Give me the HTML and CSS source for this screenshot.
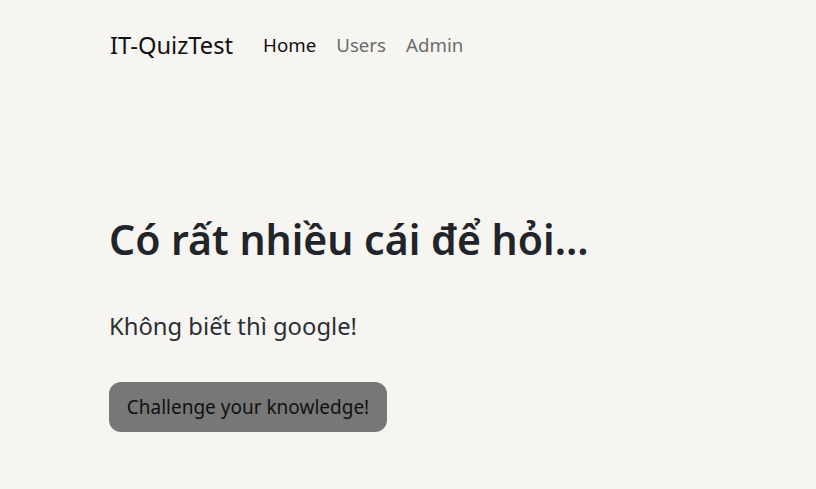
FILE: index.html
```html
<!DOCTYPE html>
<html lang="vi">
<head>
<meta charset="utf-8">
<title>IT-QuizTest</title>
<link rel="stylesheet" href="styles.css">
</head>
<body>
<header class="navbar">
  <a class="brand" href="#">IT-QuizTest</a>
  <nav class="nav">
    <a class="nav-link active" href="#">Home</a>
    <a class="nav-link" href="#">Users</a>
    <a class="nav-link" href="#">Admin</a>
  </nav>
</header>
<main class="hero">
  <h1 class="title">Có rất nhiều cái để hỏi...</h1>
  <p class="lead">Không biết thì google!</p>
  <a class="btn" href="#">Challenge your knowledge!</a>
</main>
</body>
</html>
```

FILE: styles.css
```css
* { box-sizing: border-box; }
html, body { margin: 0; }
body {
  background: #f6f5f1;
  font-family: "Noto Sans", "Open Sans", sans-serif;
  color: #212529;
  padding: 0 0 0 109px;
}
a { text-decoration: none; }
.navbar {
  display: flex;
  align-items: center;
  height: 89px;
  gap: 30px;
}
.brand {
  font-size: 23.7px;
  color: #111;
  padding-left: 1px;
}
.nav {
  display: flex;
  gap: 20px;
}
.nav-link {
  font-size: 18.7px;
  color: #6c6c6c;
}
.nav-link.active { color: #111; }
.hero {
  padding-top: 126px;
}
.title {
  margin: 0;
  font-size: 41px;
  font-weight: 600;
  line-height: 1.2;
  color: #212529;
}
.lead {
  margin: 46px 0 0;
  font-size: 23.8px;
  font-weight: 400;
  color: #2b2f33;
}
.btn {
  display: inline-block;
  margin-top: 40px;
  width: 278px;
  height: 50px;
  line-height: 50px;
  text-align: center;
  font-size: 19px;
  color: #111;
  background: #777;
  border-radius: 12px;
}
```
